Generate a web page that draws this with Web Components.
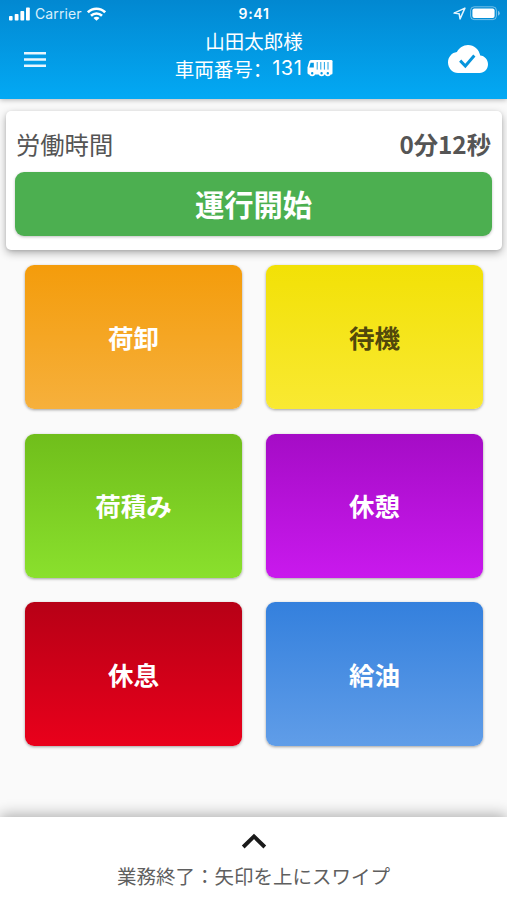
<!DOCTYPE html>
<html lang="ja">
<head>
<meta charset="utf-8">
<title>運行管理</title>
<style>
    body {
        margin: 0;
        background: #fafafa;
        font-family: "Noto Sans CJK JP", sans-serif;
    }
</style>
</head>
<body>
<driver-app></driver-app>

<script>
function createTemplate (html) {
    const template = document.createElement('template');
    template.innerHTML = html;
    return template;
}

class BaseElement extends HTMLElement {
    constructor () {
        super();
        this._shadowRoot = this.attachShadow({ mode: 'open' });
        this._shadowRoot.appendChild(this.constructor.template.content.cloneNode(true));
    }
}

class StatusBar extends BaseElement {
    static template = createTemplate(`
        <style>
            :host {
                display: grid;
                grid-template-columns: 1fr auto 1fr;
                align-items: center;
                height: 27px;
                padding: 0 7px 0 9px;
                font: 14px/27px Inter, sans-serif;
                color: #fff;
            }
            .left, .right {
                display: flex;
                align-items: center;
            }
            .left { gap: 5px; }
            .right { justify-content: flex-end; gap: 4px; }
            .carrier { color: #d9effb; letter-spacing: 0.1px; }
            .time {
                margin-right: 1px;
                font-size: 14px;
                font-weight: 600;
                letter-spacing: 0.7px;
            }
            svg { display: block; }
        </style>
        <div class="left">
            <svg width="21" height="14" viewBox="0 0 21 14" fill="#fff">
                <rect x="0" y="9" width="3.6" height="4.5" rx="0.8"/>
                <rect x="5.7" y="7" width="3.8" height="6.5" rx="0.8"/>
                <rect x="11.4" y="4" width="3.8" height="9.5" rx="0.8"/>
                <rect x="17" y="0.5" width="3.8" height="13" rx="0.8"/>
            </svg>
            <span class="carrier">Carrier</span>
            <svg width="19" height="14" viewBox="0 0 19 14" fill="none" stroke="#fff" stroke-width="2.6">
                <path d="M0.9 5.3a12.3 12.3 0 0 1 17.2 0"/>
                <path d="M4 8.8a7.9 7.9 0 0 1 11 0"/>
                <path d="M9.5 13.8L6.5 11a4.2 4.2 0 0 1 6 0z" fill="#fff" stroke="none"/>
            </svg>
        </div>
        <span class="time">9:41</span>
        <div class="right">
            <svg width="13" height="13" viewBox="0 0 12 12" fill="none" stroke="#e4f4fd" stroke-width="1.4" stroke-linejoin="round">
                <path d="M11 1L1 5.6l4.7.7.8 4.7z"/>
            </svg>
            <svg width="30" height="15" viewBox="0 0 30 15">
                <rect x="0.6" y="0.8" width="25.8" height="12.8" rx="3.6" fill="none" stroke="#fff" stroke-opacity="0.45"/>
                <rect x="2.4" y="2.5" width="22.2" height="9.4" rx="2" fill="#fff"/>
                <path d="M28 4.8q1.8.8 1.8 2.5t-1.8 2.5z" fill="#fff" fill-opacity="0.5"/>
            </svg>
        </div>`);
}

class AppHeader extends BaseElement {
    static template = createTemplate(`
        <style>
            :host {
                display: block;
                height: 99px;
                background: linear-gradient(#0288d1 0, #03a9f4 100%);
                box-shadow: 0 1px 5px rgba(0, 0, 0, 0.28);
                color: #fff;
            }
            .bar {
                display: grid;
                grid-template-columns: 1fr auto 1fr;
                height: 65px;
                padding: 0 19px 0 23px;
            }
            .menu { margin-top: 21px; }
            .cloud { margin-top: 18px; justify-self: end; }
            .title {
                margin-right: 3px;
                font-size: 19.5px;
                line-height: 27px;
                text-align: center;
            }
            .vehicle {
                display: flex;
                align-items: center;
                padding-top: 1px;
            }
            .colon { font-family: "Noto Sans CJK SC", sans-serif; }
            .number { font-family: Inter, sans-serif; font-size: 20px; letter-spacing: 0.5px; }
            .truck { margin: 0 0 2px 5px; }
            svg { display: block; }
        </style>
        <status-bar></status-bar>
        <div class="bar">
            <svg class="menu" width="24" height="24" viewBox="0 0 24 24" fill="#e8f6fe">
                <path d="M1 4h22v2.6H1zM1 10.2h22v2.6H1zM1 16.4h22v2.6H1z"/>
            </svg>
            <div class="title">
                <div><slot name="driver"></slot></div>
                <div class="vehicle">
                    <span>車両番号</span><span class="colon" lang="zh-CN">：</span>
                    <span class="number"><slot name="vehicle"></slot></span>
                    <svg class="truck" width="26" height="18" viewBox="0 0 26 18">
                        <path d="M2.2 2.4Q2.8 1 4.5 1H24.2Q25.5 1 25.5 2.3V14.2Q25.5 15.4 24.2 15.4H2Q.5 15.4.5 14V8.6z" fill="#fff"/>
                        <path d="M3.6 3.8H6.8V8.4H2.3z" fill="#0398e2"/>
                        <path d="M10.2 3V10.6M13.8 3V10.6M17.4 3V10.6M21 3V10.6" stroke="#0398e2" stroke-width="0.9"/>
                        <g fill="#0399e4" stroke="#fff" stroke-width="1.8">
                            <circle cx="5.2" cy="14.2" r="2.1"/>
                            <circle cx="14.6" cy="14.2" r="2.1"/>
                            <circle cx="20.8" cy="14.2" r="2.1"/>
                        </g>
                    </svg>
                </div>
            </div>
            <svg class="cloud" width="40" height="28" viewBox="0 4 24 16" preserveAspectRatio="none">
                <path d="M19.35 10.04C18.67 6.59 15.64 4 12 4 9.11 4 6.6 5.64 5.35 8.04 2.34 8.36 0 10.91 0 14c0 3.31 2.69 6 6 6h13c2.76 0 5-2.24 5-5 0-2.64-2.05-4.78-4.65-4.96z" fill="#fff"/>
                <path d="M7.3 12.9l3.1 3.1 5.4-6" fill="none" stroke="#0795dc" stroke-width="1.8"/>
            </svg>
        </div>`);
}

class WorkCard extends BaseElement {
    static template = createTemplate(`
        <style>
            :host {
                display: block;
                box-sizing: border-box;
                height: 139px;
                margin: 12px 5px 0 6px;
                padding: 15px 10px 0 9px;
                border-radius: 5px;
                background: #fff;
                box-shadow: 0 3px 9px rgba(0, 0, 0, 0.3), 0 1px 3px rgba(0, 0, 0, 0.1);
            }
            .row {
                display: flex;
                justify-content: space-between;
                height: 46px;
                padding: 0 1px;
                font-size: 24.3px;
                line-height: 36px;
                color: #555;
            }
            .time { font-weight: 700; }
            button {
                display: block;
                width: 100%;
                height: 64px;
                padding: 0 0 1px;
                border: none;
                border-radius: 9px;
                background: #4caf50;
                box-shadow: 0 1px 3px rgba(0, 0, 0, 0.25);
                font: 700 29.3px/1 "Noto Sans CJK JP", sans-serif;
                color: #fff;
                cursor: pointer;
            }
        </style>
        <div class="row">
            <span>労働時間</span>
            <span class="time"><slot name="time"></slot></span>
        </div>
        <button><slot name="action"></slot></button>`);
}

class TaskTile extends BaseElement {
    static template = createTemplate(`
        <style>
            :host { display: block; }
            button {
                display: block;
                width: 100%;
                height: 100%;
                padding: 0 0 1px;
                border: none;
                border-radius: 9px;
                background: linear-gradient(var(--from), var(--to));
                box-shadow: 0 1px 3px rgba(0, 0, 0, 0.36);
                font: 700 25.5px/1 "Noto Sans CJK JP", sans-serif;
                color: var(--text, #fff);
                cursor: pointer;
            }
        </style>
        <button><slot></slot></button>`);
}

class TaskGrid extends BaseElement {
    static template = createTemplate(`
        <style>
            :host {
                display: grid;
                grid-template-columns: 1fr 1fr;
                grid-auto-rows: 144px;
                gap: 24.5px 24px;
                padding: 15px 24px 0 25px;
            }
        </style>
        <slot></slot>`);
}

class SwipeSheet extends BaseElement {
    static template = createTemplate(`
        <style>
            :host {
                display: flex;
                flex-direction: column;
                align-items: center;
                box-sizing: border-box;
                height: 83px;
                padding-top: 16px;
                background: #fff;
                box-shadow: 0 -2px 14px rgba(0, 0, 0, 0.32);
                font-size: 19.5px;
                line-height: 28px;
                color: #5f5f5f;
            }
            svg { display: block; margin-bottom: 13px; }
        </style>
        <svg width="26" height="16" viewBox="0 0 26 16" fill="none" stroke="#1a1a1a" stroke-width="3.9">
            <path d="M2.2 14L13 3.4l10.8 10.6"/>
        </svg>
        <div><slot></slot></div>`);
}

class DriverApp extends BaseElement {
    static template = createTemplate(`
        <style>
            :host {
                display: flex;
                flex-direction: column;
                height: 100vh;
                overflow: hidden;
            }
            swipe-sheet { margin-top: auto; }
        </style>
        <app-header>
            <span slot="driver">山田太郎様</span>
            <span slot="vehicle">131</span>
        </app-header>
        <work-card>
            <span slot="time">0分12秒</span>
            <span slot="action">運行開始</span>
        </work-card>
        <task-grid></task-grid>
        <swipe-sheet>業務終了：矢印を上にスワイプ</swipe-sheet>`);

    connectedCallback () {
        const grid = this._shadowRoot.querySelector('task-grid');
        const tasks = [
            { text: '荷卸', from: '#f49c0b', to: '#f6b03c' },
            { text: '待機', from: '#f2e106', to: '#f9e932', color: '#51480b' },
            { text: '荷積み', from: '#70be1b', to: '#8ae02d' },
            { text: '休憩', from: '#a50cc6', to: '#c919ed' },
            { text: '休息', from: '#b70016', to: '#e9001b' },
            { text: '給油', from: '#3480dd', to: '#609de8' }
        ];
        tasks.forEach((task) => {
            const tile = document.createElement('task-tile');
            tile.textContent = task.text;
            tile.style.setProperty('--from', task.from);
            tile.style.setProperty('--to', task.to);
            if (task.color) tile.style.setProperty('--text', task.color);
            grid.appendChild(tile);
        });
    }
}

self.customElements.define('status-bar', StatusBar);
self.customElements.define('app-header', AppHeader);
self.customElements.define('work-card', WorkCard);
self.customElements.define('task-tile', TaskTile);
self.customElements.define('task-grid', TaskGrid);
self.customElements.define('swipe-sheet', SwipeSheet);
self.customElements.define('driver-app', DriverApp);
</script>
</body>
</html>
